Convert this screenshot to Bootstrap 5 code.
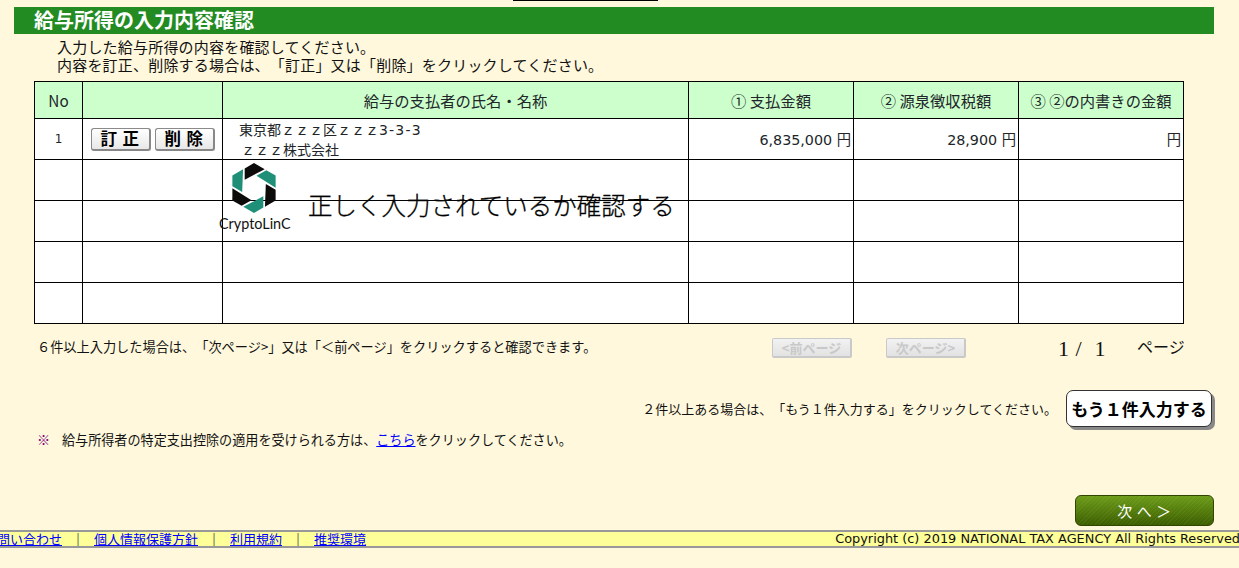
<!DOCTYPE html>
<html lang="ja">
<head>
<meta charset="utf-8">
<title>給与所得の入力内容確認</title>
<link href="https://cdn.jsdelivr.net/npm/bootstrap@5.3.0/dist/css/bootstrap.min.css" rel="stylesheet">
<style>
html, body { height: 100%; }
body { background: #fff8dc; color: #111; font-family: "Noto Sans CJK JP", "Liberation Sans", sans-serif; font-size: 14px; overflow: hidden; text-spacing-trim: space-all; }
.topmark { width: 145px; height: 1px; margin-left: 513px; background: #000; }
.titlebar { margin: 6px 25px 0 14px; height: 27px; padding-left: 20px; background: #228b22; color: #fff; font-size: 20px; font-weight: 700; line-height: 25px; }
.intro { margin: 4px 0 0 57px; height: 43px; font-size: 15px; line-height: 18px; letter-spacing: .2px; }
.sheetwrap { position: relative; width: 1149px; margin-left: 34px; }
.sheet { width: 1149px; table-layout: fixed; margin: 0; --bs-table-bg: #fff; --bs-table-border-color: #000; border-color: #000; }
.sheet th, .sheet td { padding: 0; font-weight: 400; vertical-align: middle; line-height: 20px; }
.sheet thead th { height: 37px; background: #ccffcc; --bs-table-bg: #ccffcc; text-align: center; font-size: 15.3px; }
.sheet tbody tr { height: 41px; }
.sheet .num { font-family: "DejaVu Sans", "Noto Sans CJK JP", sans-serif; font-size: 14.3px; text-align: right; padding: 1px 2px 0 0; }
.sheet .idx { text-align: center; font-family: "DejaVu Sans", sans-serif; font-size: 12px; }
.sheet .who { padding-left: 16px; font-size: 14px; }
.addrno { font-family: "DejaVu Sans", sans-serif; letter-spacing: 1.2px; line-height: 0; }
.coname { margin-left: 2px; }
.fixbtn { width: 60px; height: 23px; padding: 0 0 0 5px; border: 1px solid #8a8a8a; border-right: 2px solid #888; border-bottom: 2px solid #888; border-radius: 3px; background: linear-gradient(#fff, #e8e8e8); color: #000; font-size: 16.5px; font-weight: 700; line-height: 19px; letter-spacing: 5.5px; }
.overlay { position: absolute; left: 0; top: 0; pointer-events: none; }
.logomark { position: absolute; left: 198px; top: 82px; width: 44px; height: 50px; }
.logoword { position: absolute; left: 185px; top: 133px; width: 72px; font-family: "Lato", "Liberation Sans", sans-serif; font-size: 14.4px; line-height: 20px; white-space: nowrap; color: #111; }
.bigtext { position: absolute; left: 274px; top: 106px; font-size: 24.5px; font-weight: 300; -webkit-text-stroke: .3px #000; line-height: 36px; white-space: nowrap; color: #000; }
.pagerrow { height: 66px; margin-left: 34px; width: 1150px; padding-top: 13px; }
.hint { font-size: 13.2px; line-height: 20px; width: 738px; padding-left: 3px; flex-shrink: 0; }
.pagebtn { width: 80px; height: 20px; margin-top: 1px; padding: 0; flex-shrink: 0; border: 1px solid #c9c9c9; border-right-width: 2px; border-bottom-width: 2px; border-radius: 2px; background: linear-gradient(#f2f2f2, #e2e2e2); color: #c8c8c8; font-size: 13px; font-weight: 700; line-height: 16px; }
.pagegap { margin-left: 34px; }
.pagecount { width: 79px; margin-left: 92px; flex-shrink: 0; font-family: "Liberation Serif", serif; font-size: 22px; line-height: 22px; word-spacing: 1px; white-space: pre; padding-top: 1px; }
.pageword { font-size: 16px; line-height: 18px; white-space: nowrap; flex-shrink: 0; }
.addrow { height: 37px; padding-right: 27px; }
.addtext { font-size: 13px; margin-right: 9px; }
.addbtn { width: 146px; height: 37px; padding: 0; background: #fff; border: 1px solid #333; border-radius: 7px; box-shadow: 3px 3px 0 #888; color: #000; font-size: 17px; font-weight: 700; white-space: nowrap; }
.notice { height: 66px; margin: 2px 0 0 37px; padding-top: 1px; font-size: 13.1px; line-height: 20px; }
.notice i { font-style: normal; color: #800080; width: 25px; display: inline-block; }
.notice a, .footbar a { color: #00f; }
.nextrow { height: 35px; padding-right: 25px; }
.nextbtn { width: 139px; height: 31px; padding: 0 0 0 4px; border: 1px solid #2f4500; border-radius: 6px; background: repeating-linear-gradient(135deg, rgba(255,255,255,.05) 0 1px, transparent 1px 3px), linear-gradient(#6c9c18, #3c5e00); color: #fff; font-size: 15px; letter-spacing: 4.5px; line-height: 27px; }
.footbar { height: 18px; border-top: 2px solid #999; border-bottom: 2px solid #999; background: #ffff99; font-size: 13px; line-height: 13px; white-space: nowrap; overflow: hidden; }
.footlinks { margin-left: -3px; }
.footlinks span { width: 32px; text-align: center; color: #555; }
.copy { font-family: "DejaVu Sans", sans-serif; font-size: 12.9px; color: #111; margin-right: -1px; }
</style>
</head>
<body>
<div class="topmark"></div>
<div class="titlebar">給与所得の入力内容確認</div>
<div class="intro">入力した給与所得の内容を確認してください。<br>内容を訂正、削除する場合は、「訂正」又は「削除」をクリックしてください。</div>

<div class="sheetwrap">
  <table class="table table-bordered sheet">
    <colgroup><col style="width:48px"><col style="width:140px"><col style="width:466px"><col style="width:165px"><col style="width:165px"><col style="width:165px"></colgroup>
    <thead>
      <tr><th>No</th><th></th><th>給与の支払者の氏名・名称</th><th>① 支払金額</th><th>② 源泉徴収税額</th><th>③ ②の内書きの金額</th></tr>
    </thead>
    <tbody>
      <tr>
        <td class="idx">1</td>
        <td><div class="d-flex justify-content-center gap-1"><button type="button" class="btn fixbtn">訂正</button><button type="button" class="btn fixbtn">削除</button></div></td>
        <td class="who">東京都ｚｚｚ区ｚｚｚ<span class="addrno">3-3-3</span><br><span class="coname">ｚｚｚ株式会社</span></td>
        <td class="num">6,835,000 円</td>
        <td class="num">28,900 円</td>
        <td class="num">円</td>
      </tr>
      <tr><td></td><td></td><td></td><td></td><td></td><td></td></tr>
      <tr><td></td><td></td><td></td><td></td><td></td><td></td></tr>
      <tr><td></td><td></td><td></td><td></td><td></td><td></td></tr>
      <tr><td></td><td></td><td></td><td></td><td></td><td></td></tr>
    </tbody>
  </table>
  <div class="overlay">
    <svg class="logomark" viewBox="0 0 44 50" aria-hidden="true">
      <g>
        <polygon fill="#0d0a0a" points="22,0 32.7,6.2 12.7,16.7 12.7,5.4"/>
        <polygon fill="#1f8f78" points="22,0 32.7,6.2 12.7,16.7 12.7,5.4" transform="rotate(60 22 25)"/>
        <polygon fill="#0d0a0a" points="22,0 32.7,6.2 12.7,16.7 12.7,5.4" transform="rotate(120 22 25)"/>
        <polygon fill="#1f8f78" points="22,0 32.7,6.2 12.7,16.7 12.7,5.4" transform="rotate(180 22 25)"/>
        <polygon fill="#0d0a0a" points="22,0 32.7,6.2 12.7,16.7 12.7,5.4" transform="rotate(240 22 25)"/>
        <polygon fill="#1f8f78" points="22,0 32.7,6.2 12.7,16.7 12.7,5.4" transform="rotate(300 22 25)"/>
      </g>
    </svg>
    <div class="logoword">CryptoLinC</div>
    <div class="bigtext">正しく入力されているか確認する</div>
  </div>
</div>

<div class="pagerrow d-flex align-items-start">
  <div class="hint">６件以上入力した場合は、「次ページ&gt;」又は「＜前ページ」をクリックすると確認できます。</div>
  <button type="button" class="btn pagebtn">&lt;前ページ</button>
  <button type="button" class="btn pagebtn pagegap">次ページ&gt;</button>
  <div class="pagecount">1 /  1</div>
  <div class="pageword">ページ</div>
</div>

<div class="addrow d-flex justify-content-end align-items-center">
  <span class="addtext">２件以上ある場合は、「もう１件入力する」をクリックしてください。</span>
  <button type="button" class="btn addbtn">もう１件入力する</button>
</div>

<div class="notice"><i>※</i>給与所得者の特定支出控除の適用を受けられる方は、<a href="#">こちら</a>をクリックしてください。</div>

<div class="nextrow d-flex justify-content-end">
  <button type="button" class="btn nextbtn">次へ＞</button>
</div>

<div class="footbar d-flex justify-content-between">
  <div class="footlinks d-flex">
    <a href="#">問い合わせ</a><span>|</span><a href="#">個人情報保護方針</a><span>|</span><a href="#">利用規約</a><span>|</span><a href="#">推奨環境</a>
  </div>
  <div class="copy">Copyright (c) 2019 NATIONAL TAX AGENCY All Rights Reserved</div>
</div>
<script src="https://cdn.jsdelivr.net/npm/bootstrap@5.3.0/dist/js/bootstrap.bundle.min.js"></script>
</body>
</html>
